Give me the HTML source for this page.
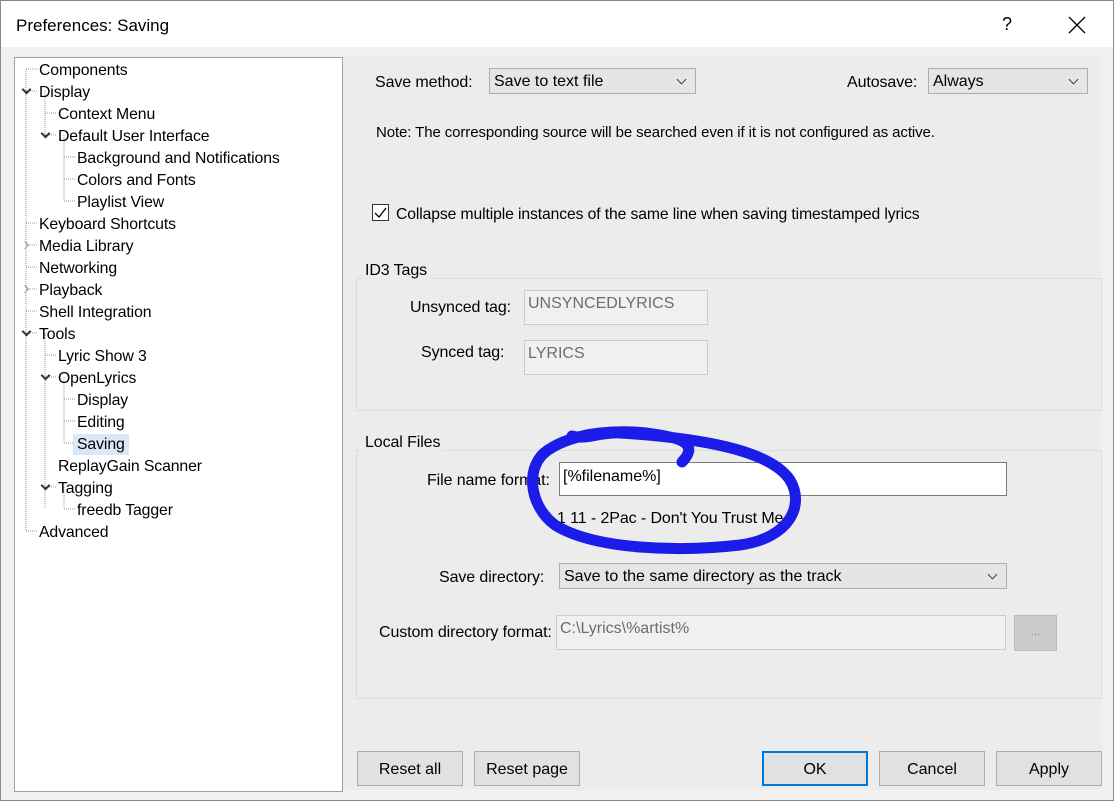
<!DOCTYPE html><html><head><style>
body{margin:0;width:1114px;height:801px;position:relative;background:#fff;font-family:"Liberation Sans",sans-serif;font-size:16px;color:#000;overflow:hidden}
.a{position:absolute;white-space:nowrap}
.win{position:absolute;left:0;top:0;width:1112px;height:799px;border:1px solid #888}
.body{position:absolute;left:1px;top:47px;width:1112px;height:753px;background:#f0f0f0}
.tree{position:absolute;left:14px;top:57px;width:327px;height:733px;background:#fff;border:1px solid #a0a0a0}
.rp{position:absolute;left:343px;top:57px;width:758px;height:733px;background:#ececec}
.cb{position:absolute;background:#e5e5e5;border:1px solid #adadad;height:26px;box-sizing:border-box;padding:4px 4px 0}
.cb:after{content:"";position:absolute;right:10px;top:7px;width:6px;height:6px;border-right:1px solid #444;border-bottom:1px solid #444;transform:rotate(45deg)}
.ro{position:absolute;background:#f0f0f0;border:1px solid #ccc;box-sizing:border-box;color:#6d6d6d;padding:4px 3px}
.grp{position:absolute;border:1px solid #dcdcdc}
.btn{position:absolute;background:#e1e1e1;border:1px solid #adadad;box-sizing:border-box;text-align:center;line-height:35px;height:35px}
.t{position:absolute;white-space:nowrap;letter-spacing:-0.1px}
.tr .t{top:2px}
.arr{position:absolute;width:5px;height:5px;border-right:2px solid #333;border-bottom:2px solid #333;transform:rotate(45deg)}
.arr2{position:absolute;width:5px;height:5px;border-right:1px solid #999;border-bottom:1px solid #999;transform:rotate(-45deg)}
</style></head><body>
<div class="win"></div>
<div class="a" style="left:16px;top:16px;font-size:17px">Preferences: Saving</div>
<div class="a" style="left:1002px;top:14px;font-size:18px">?</div>
<svg class="a" style="left:1068px;top:16px" width="18" height="18"><path d="M1 1L17 17M17 1L1 17" stroke="#000" stroke-width="1.3"/></svg>
<div class="body"></div>
<div class="tree"></div>
<svg class="a" style="left:14px;top:57px" width="100" height="480">
<g stroke="#999" stroke-dasharray="1,1" fill="none">
<path d="M12 12H24M12 12V474M12 34H24M12 166H24M12 188H24M12 210H24M12 232H24M12 254H24M12 276H24M12 474H24"/>
<path d="M31 34V78M31 56H42M31 78H42"/>
<path d="M50 78V144M50 100H62M50 122H62M50 144H62"/>
<path d="M31 276V430M31 298H42M31 320H42M31 430H42"/>
<path d="M50 320V386M50 342H62M50 364H62M50 386H62"/>
<path d="M31 430V452M50 452H62M50 430V452"/>
</g></svg>
<div class="arr" style="left:23px;top:86px"></div>
<div class="arr" style="left:42px;top:130px"></div>
<div class="arr" style="left:23px;top:328px"></div>
<div class="arr" style="left:42px;top:372px"></div>
<div class="arr" style="left:42px;top:482px"></div>
<div class="arr2" style="left:22px;top:242px"></div>
<div class="arr2" style="left:22px;top:286px"></div>
<div style="position:absolute;left:0;top:2px;font-size:15.8px">
<div class="t" style="left:39px;top:60px">Components</div>
<div class="t" style="left:39px;top:82px">Display</div>
<div class="t" style="left:58px;top:104px">Context Menu</div>
<div class="t" style="left:58px;top:126px">Default User Interface</div>
<div class="t" style="left:77px;top:148px">Background and Notifications</div>
<div class="t" style="left:77px;top:170px">Colors and Fonts</div>
<div class="t" style="left:77px;top:192px">Playlist View</div>
<div class="t" style="left:39px;top:214px">Keyboard Shortcuts</div>
<div class="t" style="left:39px;top:236px">Media Library</div>
<div class="t" style="left:39px;top:258px">Networking</div>
<div class="t" style="left:39px;top:280px">Playback</div>
<div class="t" style="left:39px;top:302px">Shell Integration</div>
<div class="t" style="left:39px;top:324px">Tools</div>
<div class="t" style="left:58px;top:346px">Lyric Show 3</div>
<div class="t" style="left:58px;top:368px">OpenLyrics</div>
<div class="t" style="left:77px;top:390px">Display</div>
<div class="t" style="left:77px;top:412px">Editing</div>
<div class="t" style="left:73px;top:432px;background:#d9e7f7;padding:2px 4px 1px">Saving</div>
<div class="t" style="left:58px;top:456px">ReplayGain Scanner</div>
<div class="t" style="left:58px;top:478px">Tagging</div>
<div class="t" style="left:77px;top:500px">freedb Tagger</div>
<div class="t" style="left:39px;top:522px">Advanced</div>
</div>
<div class="rp"></div>
<div class="t" style="left:375px;top:74px">Save method:</div>
<div class="cb" style="left:489px;top:68px;width:207px">Save to text file</div>
<div class="t" style="left:847px;top:74px">Autosave:</div>
<div class="cb" style="left:928px;top:68px;width:160px">Always</div>
<div class="t" style="left:376px;top:124px;font-size:15px">Note: The corresponding source will be searched even if it is not configured as active.</div>
<div class="a" style="left:372px;top:204px;width:17px;height:17px;border:1px solid #333;background:#fff;box-sizing:border-box"></div>
<svg class="a" style="left:372px;top:204px" width="17" height="17"><path d="M3 9L7 13L14 4" stroke="#000" fill="none" stroke-width="1.3"/></svg>
<div class="t" style="left:396px;top:206px;font-size:15.7px">Collapse multiple instances of the same line when saving timestamped lyrics</div>
<div class="grp" style="left:356px;top:278px;width:744px;height:131px"></div>
<div class="t" style="left:362px;top:262px;background:#ececec;padding:0 3px">ID3 Tags</div>
<div class="t" style="left:410px;top:299px">Unsynced tag:</div>
<div class="ro" style="left:524px;top:290px;width:184px;height:35px">UNSYNCEDLYRICS</div>
<div class="t" style="left:421px;top:344px">Synced tag:</div>
<div class="ro" style="left:524px;top:340px;width:184px;height:35px">LYRICS</div>
<div class="grp" style="left:356px;top:450px;width:744px;height:247px"></div>
<div class="t" style="left:362px;top:434px;background:#ececec;padding:0 3px">Local Files</div>
<div class="t" style="left:427px;top:472px">File name format:</div>
<div class="a" style="left:559px;top:462px;width:448px;height:34px;background:#fff;border:1px solid #7a7a7a;box-sizing:border-box;padding:5px 3px">[%filename%]</div>
<div class="t" style="left:557px;top:510px">1 11 - 2Pac - Don't You Trust Me</div>
<div class="t" style="left:439px;top:569px">Save directory:</div>
<div class="cb" style="left:559px;top:563px;width:448px">Save to the same directory as the track</div>
<div class="t" style="left:379px;top:624px">Custom directory format:</div>
<div class="ro" style="left:556px;top:615px;width:450px;height:35px">C:\Lyrics\%artist%</div>
<div class="a" style="left:1014px;top:615px;width:43px;height:36px;background:#ccc;border:1px solid #bbb;box-sizing:border-box;text-align:center;color:#888;font-size:12px;line-height:30px">...</div>
<svg class="a" style="left:0;top:0" width="1114" height="801"><path d="M682 462C695 448 690 440 660 435C620 428 575 432 548 450C525 465 528 505 555 525C595 550 680 552 740 545C790 538 805 505 790 480C770 450 700 438 620 433C600 432 585 440 572 436" stroke="#1c1ce8" stroke-width="11" fill="none" stroke-linecap="round" stroke-linejoin="round"/></svg>
<div class="btn" style="left:357px;top:751px;width:106px">Reset all</div>
<div class="btn" style="left:474px;top:751px;width:106px">Reset page</div>
<div class="btn" style="left:762px;top:751px;width:106px;border:2px solid #0078d7;line-height:33px">OK</div>
<div class="btn" style="left:879px;top:751px;width:106px">Cancel</div>
<div class="btn" style="left:996px;top:751px;width:106px">Apply</div>
</body></html>
